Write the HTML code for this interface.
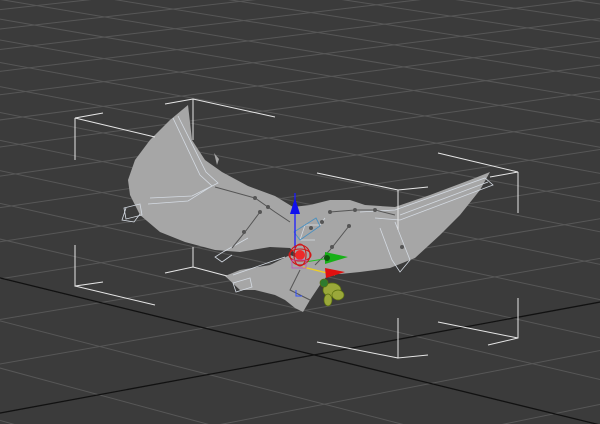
<!DOCTYPE html>
<html><head><meta charset="utf-8"><style>
html,body{margin:0;padding:0;background:#3b3b3b;width:600px;height:424px;overflow:hidden}
svg{display:block;overflow:hidden}
</style></head><body>
<svg id="s" width="600" height="424" viewBox="0 0 600 424" xmlns="http://www.w3.org/2000/svg">
<rect width="600" height="424" fill="#3b3b3b"/>
<g id="grid" stroke="#575757" stroke-width="1"></g>
<line x1="-10" y1="275.5" x2="610" y2="427.4" stroke="#111" stroke-width="1.3"/>
<line x1="-10" y1="414.9" x2="610" y2="300.2" stroke="#111" stroke-width="1.3"/>
<polygon fill="#a6a6a6" points="188,105 192,140 205,160 222,172 248,186 275,196 293,207 310,205 330,200 350,200 365,205 395,207 430,195 470,180 490,172 480,190 460,215 440,235 415,258 390,268 360,272 340,274 320,272 300,258 290,248 270,247 240,252 215,250 185,242 160,232 140,215 130,195 128,180 135,160 150,140 170,120"/>
<polygon fill="#a6a6a6" points="225,276 240,270 270,265 290,255 310,262 330,272 320,285 310,300 303,312 295,308 285,300 275,295 255,290 240,290"/>
<path d="M217,165 l-3,-12 l5,6z" fill="#a6a6a6"/>
<g fill="none" stroke="#d4dae2" stroke-width="0.8">
<polyline points="173,118 200,175 212,186 188,201 148,204"/>
<polyline points="178,116 206,172 218,183 192,196 150,198"/>
<polygon points="124,208 140,204 142,215 126,219"/>
<polyline points="126,208 122,220 134,222 140,214"/>
<polyline points="248,238 223,252 215,257 222,262 232,255"/>
<polyline points="233,275 270,262 285,257"/>
<polygon points="233,283 250,278 252,287 236,292"/>
<polyline points="360,212 395,210 485,178 493,185 400,220 375,218"/>
<polyline points="400,215 488,182"/>
<polyline points="395,222 410,260 400,272 392,260 380,228"/>
<polyline points="325,218 320,225 305,225 300,240 315,240"/>
</g>
<g stroke="#555" stroke-width="1" fill="#555">
<polyline fill="none" points="215,187 255,198 275,212 290,222"/>
<polyline fill="none" points="260,212 245,232 232,248"/>
<polyline fill="none" points="330,212 355,210 375,210 395,215"/>
<polyline fill="none" points="349,226 330,250 315,265"/>
<polyline fill="none" points="300,270 290,290 310,300"/>
<circle cx="255" cy="198" r="1.5"/><circle cx="268" cy="207" r="1.5"/><circle cx="260" cy="212" r="1.5"/>
<circle cx="244" cy="232" r="1.5"/><circle cx="330" cy="212" r="1.5"/><circle cx="355" cy="210" r="1.5"/>
<circle cx="375" cy="210" r="1.5"/><circle cx="349" cy="226" r="1.5"/><circle cx="332" cy="247" r="1.5"/>
<circle cx="322" cy="222" r="1.5"/><circle cx="311" cy="228" r="1.5"/><circle cx="402" cy="247" r="1.5"/>
</g>
<g stroke="#e6e6e6" stroke-width="1" fill="none">
<path d="M165,104 L193,99 L275,117 M193,99 L193,140"/>
<path d="M103,113 L75,118 L155,137 M75,118 L75,160"/>
<path d="M75,245 L75,286 L103,282 M75,286 L155,305"/>
<path d="M193,247 L193,267 L165,273 M193,267 L227,276"/>
<path d="M438,153 L518,172 L490,177 M518,172 L518,213"/>
<path d="M317,173 L398,190 L428,187 M398,190 L398,230"/>
<path d="M398,318 L398,358 L428,355 M398,358 L317,342"/>
<path d="M518,298 L518,338 L488,345 M518,338 L438,322"/>
</g>
<g>
<path d="M316,218 L320,226 L300,240 L294,232 Z" fill="none" stroke="#4a90c0" stroke-width="0.9"/>
<line x1="295" y1="193" x2="295" y2="248" stroke="#1c1cff" stroke-width="1.3"/>
<polygon points="295,198 290,214 300,214" fill="#1010ee"/>
<line x1="305" y1="262" x2="330" y2="258" stroke="#20c020" stroke-width="1"/>
<polygon points="325,252 348,257 325,264" fill="#18b018"/>
<circle cx="327" cy="258" r="3" fill="#0a5a0a"/>
<line x1="303" y1="267" x2="335" y2="275" stroke="#f0d020" stroke-width="1.3"/>
<polygon points="325,268 345,272 326,278" fill="#e01010"/>
<g fill="none" stroke="#d01818" stroke-width="1.1">
<circle cx="300" cy="255" r="10"/><ellipse cx="300" cy="255" rx="6" ry="11"/><ellipse cx="300" cy="255" rx="11" ry="6"/>
</g>
<circle cx="300" cy="255" r="5" fill="#ee2a2a"/>
<rect x="292" y="260" width="14" height="8" fill="none" stroke="#c050c0" stroke-width="0.8"/>
<path d="M296,290 L296,296 L302,296" stroke="#3050ff" fill="none"/>
<g fill="#9aa83a" stroke="#5a7010" stroke-width="0.7">
<ellipse cx="332" cy="290" rx="9" ry="7"/><ellipse cx="338" cy="295" rx="6" ry="5"/>
<ellipse cx="328" cy="300" rx="4" ry="6"/><ellipse cx="324" cy="283" rx="4" ry="4" fill="#2e7a2e"/>
</g>
</g>
</svg>
<script>
(function(){
var g=document.getElementById('grid'),NS='http://www.w3.org/2000/svg';
var O=[314,355],VA=[-3584,-600],VB=[5476,-600];
function clip(a,b){var m=(b[1]-a[1])/(b[0]-a[0]);
return [-10,a[1]+m*(-10-a[0]),610,a[1]+m*(610-a[0])];}
function L(a,b){var c=clip(a,b);var e=document.createElementNS(NS,'line');
e.setAttribute('x1',c[0]);e.setAttribute('y1',c[1]);e.setAttribute('x2',c[2]);e.setAttribute('y2',c[3]);g.appendChild(e);}
var k=0.02,k2=0.029;
for(var t=-45;t<=150;t++){var f=t*k;if(1+f<0.05)continue;var s=f/(1+f);
var P=[O[0]+s*(VB[0]-O[0]),O[1]+s*(VB[1]-O[1])];L(VA,P);}
for(var t=-32;t<=150;t++){var f=t*k2;if(1+f<0.05)continue;var s=f/(1+f);
var Q=[O[0]+s*(VA[0]-O[0]),O[1]+s*(VA[1]-O[1])];L(VB,Q);}
})();
</script>
</body></html>
